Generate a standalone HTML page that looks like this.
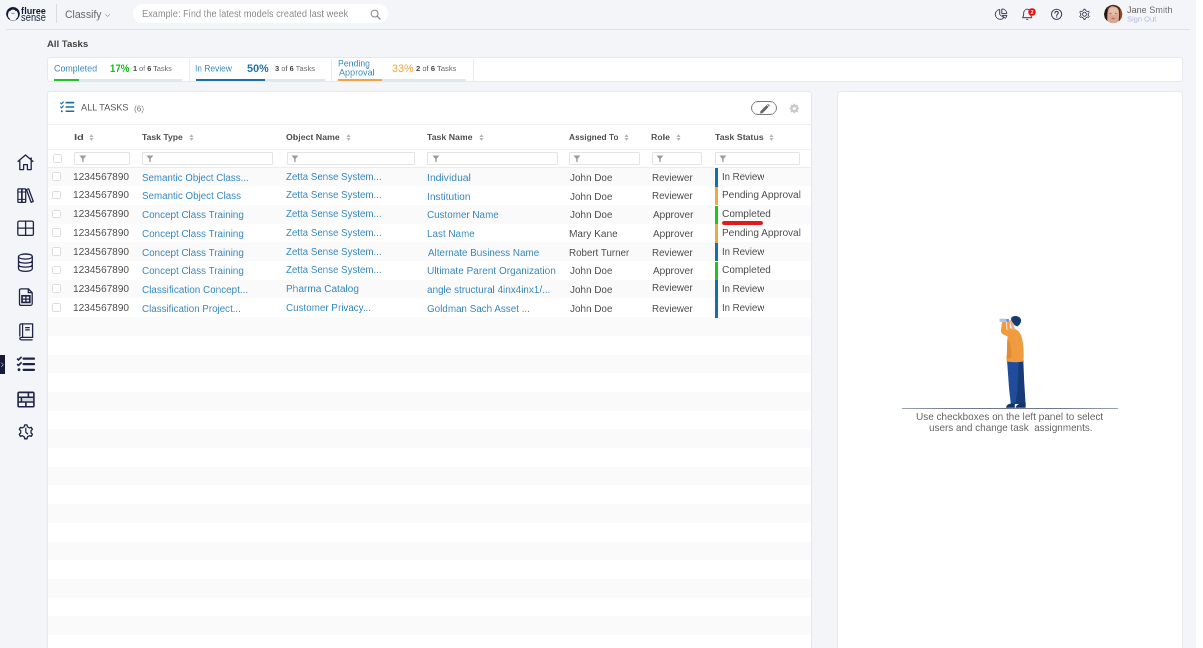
<!DOCTYPE html>
<html><head><meta charset="utf-8"><style>
html,body{margin:0;padding:0}
body{width:1203px;height:648px;overflow:hidden;position:relative;background:#f4f5f9;font-family:"Liberation Sans",sans-serif}
.t{position:absolute;white-space:nowrap;transform-origin:0 0;will-change:transform}
.b{position:absolute}
</style></head><body>
<div class="b" style="left:1196px;top:0px;width:7.00px;height:648.00px;background:#fff"></div>
<div class="b" style="left:6px;top:29px;width:1184.00px;height:1.00px;background:#dfe0e6"></div>
<svg class="b" style="left:0;top:0;will-change:transform" width="56" height="28" viewBox="0 0 56 28">
<circle cx="13" cy="13.85" r="6.9" fill="#121836"/>
<ellipse cx="13" cy="15" rx="5.05" ry="5.55" fill="#f4f5f9"/>
<path d="M9.4 9.4 L11.2 9.4 L10.3 11.2 Z M14.8 9.4 L16.6 9.4 L15.7 11.2 Z" fill="#121836"/>
<path d="M11.3 13.3 H14.7" stroke="#5a5f78" stroke-width="0.7"/>
<path d="M8.6 18.2 L9.8 19 M17.4 18.2 L16.2 19" stroke="#121836" stroke-width="0.9"/>
<text x="21.1" y="13.7" font-family="Liberation Sans" font-weight="bold" font-size="9.9" fill="#121836" textLength="24.8" lengthAdjust="spacingAndGlyphs">fluree</text>
<text x="21.1" y="20.6" font-family="Liberation Sans" font-size="10.8" fill="#121836" textLength="24.8" lengthAdjust="spacingAndGlyphs">sense</text>
</svg>
<div class="b" style="left:56px;top:4.3px;width:1.00px;height:18.40px;background:#dadbe0"></div>
<div class="t" style="left:65.11px;top:9.03px;font-size:21.20px;line-height:21.20px;color:#6a6a6a;transform:scale(0.4918,0.5000);">Classify</div>
<svg class="b" style="left:104px;top:12px" width="8" height="6" viewBox="0 0 8 6"><path d="M1.3 2.3 L3.6 4.5 L5.9 2.3" fill="none" stroke="#8a8a8a" stroke-width="0.8"/></svg>
<div class="b" style="left:133.3px;top:4.3px;width:254.30px;height:18.70px;background:#fff;border-radius:10px"></div>
<div class="t" style="left:141.84px;top:8.70px;font-size:19.60px;line-height:19.60px;color:#8c8c8c;transform:scale(0.4720,0.5000);">Example: Find the latest models created last week</div>
<svg class="b" style="left:369px;top:8px" width="13" height="13" viewBox="0 0 13 13"><circle cx="5.6" cy="5.6" r="3.4" fill="none" stroke="#8a8a8a" stroke-width="1.1"/><path d="M8.1 8.1 L11 11" stroke="#8a8a8a" stroke-width="1.3" stroke-linecap="round"/></svg>
<svg class="b" style="left:990px;top:4px" width="20" height="20" viewBox="0 0 20 20">
<path d="M9.7 5.4 A5 5 0 1 0 13.9 13.8 L9.7 10.6 Z" fill="none" stroke="#393c5b" stroke-width="1" stroke-linejoin="round"/>
<path d="M11.8 5 V9.6 H16.8 A4.6 4.6 0 0 0 11.8 5 Z" fill="none" stroke="#393c5b" stroke-width="1" stroke-linejoin="round"/>
<path d="M12.2 11.6 H17 L15.3 14.4 Z" fill="none" stroke="#393c5b" stroke-width="1" stroke-linejoin="round"/>
</svg>
<svg class="b" style="left:1017px;top:4px" width="20" height="20" viewBox="0 0 20 20">
<path d="M5.4 13.7 C6.4 12.8 6.6 11.4 6.6 9.8 C6.6 7 8 5.2 10.2 5.2 C12.4 5.2 13.8 7 13.8 9.8 C13.8 11.4 14 12.8 15 13.7 Z" fill="none" stroke="#393c5b" stroke-width="1" stroke-linejoin="round"/>
<path d="M9.2 15.2 Q10.2 15.9 11.2 15.2" fill="none" stroke="#393c5b" stroke-width="1"/>
<circle cx="15" cy="8" r="3.7" fill="#ec1016"/>
<text x="15" y="9.7" font-family="Liberation Sans" font-weight="bold" font-size="4.8" fill="#fff" text-anchor="middle">2</text>
</svg>
<svg class="b" style="left:1046px;top:4px" width="20" height="20" viewBox="0 0 20 20">
<circle cx="10.6" cy="10.3" r="5.1" fill="none" stroke="#393c5b" stroke-width="1.05"/>
<path d="M8.9 9.1 C8.9 8 9.6 7.4 10.6 7.4 C11.6 7.4 12.3 8 12.3 8.9 C12.3 10 10.7 10.2 10.7 11.5" fill="none" stroke="#393c5b" stroke-width="1.1" stroke-linecap="round"/>
<circle cx="10.7" cy="13" r="0.65" fill="#393c5b"/>
</svg>
<svg class="b" style="left:1074px;top:4px" width="20" height="20" viewBox="0 0 20 20">
<path d="M14.27 9.30 L15.55 9.57 L15.55 11.03 L14.27 11.30 L13.25 13.06 L13.65 14.31 L12.39 15.04 L11.52 14.07 L9.48 14.07 L8.61 15.04 L7.35 14.31 L7.75 13.06 L6.73 11.30 L5.45 11.03 L5.45 9.57 L6.73 9.30 L7.75 7.54 L7.35 6.29 L8.61 5.56 L9.48 6.53 L11.52 6.53 L12.39 5.56 L13.65 6.29 L13.25 7.54 Z" transform="rotate(-90 10.5 10.3)" fill="none" stroke="#393c5b" stroke-width="1" stroke-linejoin="round"/>
<circle cx="10.5" cy="10.3" r="2" fill="none" stroke="#393c5b" stroke-width="1"/>
</svg>
<svg class="b" style="left:1102px;top:3px" width="22" height="22" viewBox="0 0 22 22">
<defs><clipPath id="av"><circle cx="11.2" cy="11" r="9.2"/></clipPath>
<filter id="bl" x="-20%" y="-20%" width="140%" height="140%"><feGaussianBlur stdDeviation="0.5"/></filter></defs>
<g clip-path="url(#av)"><g filter="url(#bl)">
<rect x="0" y="0" width="22" height="22" fill="#4a2a1c"/>
<path d="M0 0 H6 C4.5 6 4.5 14 5.5 22 H0 Z" fill="#22140e"/>
<path d="M17 0 H22 V22 H17 C18.5 15 18.5 7 17 0 Z" fill="#8a4a2a"/>
<path d="M5.6 22 C5 16 5.2 9 6.6 5.6 C8 3.6 10 3.2 12 3.4 C14.6 3.7 16.2 5 16.8 7.6 C17.4 11 17 16 16.2 22 Z" fill="#d8a892"/>
<ellipse cx="11.6" cy="8.4" rx="4.4" ry="3.8" fill="#e6bfae"/>
<ellipse cx="8.6" cy="10.3" rx="1.1" ry="0.55" fill="#56687a"/><ellipse cx="13.7" cy="10.3" rx="1.1" ry="0.55" fill="#56687a"/>
<ellipse cx="11.1" cy="15.6" rx="1.8" ry="0.75" fill="#c0646e"/>
</g></g></svg>
<div class="t" style="left:1126.90px;top:6.05px;font-size:17.60px;line-height:17.60px;color:#6a6a6a;transform:scale(0.5173,0.5000);">Jane Smith</div>
<div class="t" style="left:1126.90px;top:14.87px;font-size:15.20px;line-height:15.20px;color:#b6bad8;transform:scale(0.4949,0.5000);">Sign Out</div>
<div class="t" style="left:47.10px;top:39.37px;font-size:19.20px;line-height:19.20px;color:#454545;font-weight:bold;transform:scale(0.4963,0.5000);">All Tasks</div>
<div class="b" style="left:47px;top:57px;width:1136.30px;height:24.50px;background:#fff;border:1px solid #e7e8ed;border-radius:3px;box-sizing:border-box"></div>
<div class="b" style="left:188.8px;top:58.5px;width:1.00px;height:22.00px;background:#e9eaee"></div>
<div class="b" style="left:330.8px;top:58.5px;width:1.00px;height:22.00px;background:#e9eaee"></div>
<div class="b" style="left:473.2px;top:58.5px;width:1.00px;height:22.00px;background:#e9eaee"></div>
<div class="t" style="left:54.01px;top:63.61px;font-size:18.40px;line-height:18.40px;color:#3d8bc1;transform:scale(0.4839,0.5000);">Completed</div>
<div class="t" style="left:109.59px;top:62.72px;font-size:22.40px;line-height:22.40px;color:#18c11e;font-weight:bold;transform:scale(0.4326,0.5000);">17%</div>
<div class="t" style="left:133.21px;top:64.64px;font-size:14.80px;line-height:14.80px;color:#6a6a6a;transform:scale(0.4935,0.5000);"><b style="color:#444">1</b> of <b style="color:#444">6</b> Tasks</div>
<div class="b" style="left:54.4px;top:79px;width:127.20px;height:2.00px;background:#dde7ee"></div>
<div class="b" style="left:54.4px;top:79px;width:24.20px;height:2.00px;background:#24c22a"></div>
<div class="t" style="left:194.97px;top:63.61px;font-size:18.40px;line-height:18.40px;color:#3d8bc1;transform:scale(0.4559,0.5000);">In Review</div>
<div class="t" style="left:247.31px;top:62.72px;font-size:22.40px;line-height:22.40px;color:#1f72ad;font-weight:bold;transform:scale(0.4840,0.5000);">50%</div>
<div class="t" style="left:275.20px;top:64.64px;font-size:14.80px;line-height:14.80px;color:#6a6a6a;transform:scale(0.5077,0.5000);"><b style="color:#444">3</b> of <b style="color:#444">6</b> Tasks</div>
<div class="b" style="left:196px;top:79px;width:129.00px;height:2.00px;background:#dde7ee"></div>
<div class="b" style="left:196px;top:79px;width:68.80px;height:2.00px;background:#1f6fa8"></div>
<div class="t" style="left:337.84px;top:59.01px;font-size:18.40px;line-height:18.40px;color:#3d8bc1;transform:scale(0.4738,0.5000);">Pending</div>
<div class="t" style="left:338.50px;top:68.01px;font-size:18.40px;line-height:18.40px;color:#3d8bc1;transform:scale(0.4902,0.5000);">Approval</div>
<div class="t" style="left:391.51px;top:62.72px;font-size:22.40px;line-height:22.40px;color:#efa542;transform:scale(0.4816,0.5000);">33%</div>
<div class="t" style="left:415.69px;top:64.64px;font-size:14.80px;line-height:14.80px;color:#6a6a6a;transform:scale(0.5141,0.5000);"><b style="color:#444">2</b> of <b style="color:#444">6</b> Tasks</div>
<div class="b" style="left:338.3px;top:79px;width:127.40px;height:2.00px;background:#dde7ee"></div>
<div class="b" style="left:338.3px;top:79px;width:43.80px;height:2.00px;background:#eca645"></div>
<div class="b" style="left:0px;top:355.4px;width:5.00px;height:18.50px;background:#15193a"></div>
<svg class="b" style="left:0;top:360px" width="5" height="10" viewBox="0 0 5 10"><path d="M1.2 2.6 L3.3 4.8 L1.2 7" fill="none" stroke="#cfd2e6" stroke-width="0.8"/></svg>
<svg class="b" style="left:15px;top:152px" width="21" height="21" viewBox="0 0 21 21"><path d="M2.6 9.8 L10.5 3 L18.4 9.8 M4.8 8.2 V17.6 H8.6 V12.6 H12.4 V17.6 H16.2 V8.2 M16.2 5.6 V8" fill="none" stroke="#1f2347" stroke-width="1.3" stroke-linejoin="round"/></svg>
<svg class="b" style="left:15px;top:185px" width="21" height="21" viewBox="0 0 21 21"><rect x="2.9" y="3.8" width="3.9" height="13.6" rx="0.6" fill="none" stroke="#1f2347" stroke-width="1.3"/><rect x="6.8" y="3.8" width="3.9" height="13.6" rx="0.6" fill="none" stroke="#1f2347" stroke-width="1.3"/><path d="M2.9 7 H10.7 M2.9 14.4 H10.7" stroke="#1f2347" stroke-width="1"/><path d="M11.4 4.5 L13.6 3.8 L18.3 16.5 L16.1 17.3 Z" fill="none" stroke="#1f2347" stroke-width="1.3" stroke-linejoin="round"/></svg>
<svg class="b" style="left:15px;top:218px" width="21" height="21" viewBox="0 0 21 21"><rect x="2.8" y="3.1" width="15.6" height="14.2" rx="1.4" fill="none" stroke="#1f2347" stroke-width="1.3"/><path d="M10.6 3.1 V17.3 M2.8 10.2 H18.4" stroke="#1f2347" stroke-width="1.3"/></svg>
<svg class="b" style="left:15px;top:252px" width="21" height="21" viewBox="0 0 21 21"><ellipse cx="10.4" cy="4.6" rx="6.9" ry="2.6" fill="none" stroke="#1f2347" stroke-width="1.3"/><path d="M3.5 4.6 V16.6 C3.5 18.1 6.6 19.3 10.4 19.3 C14.2 19.3 17.3 18.1 17.3 16.6 V4.6 M3.5 8.6 C3.5 10.1 6.6 11.2 10.4 11.2 C14.2 11.2 17.3 10.1 17.3 8.6 M3.5 12.6 C3.5 14.1 6.6 15.2 10.4 15.2 C14.2 15.2 17.3 14.1 17.3 12.6" fill="none" stroke="#1f2347" stroke-width="1.3"/></svg>
<svg class="b" style="left:15px;top:286px" width="21" height="21" viewBox="0 0 21 21"><path d="M6 2.8 H13.3 L17.2 6.7 V17.8 Q17.2 19.3 15.7 19.3 H6 Q4.5 19.3 4.5 17.8 V4.3 Q4.5 2.8 6 2.8 Z M13.3 2.8 V6.7 H17.2" fill="none" stroke="#1f2347" stroke-width="1.3" stroke-linejoin="round"/><rect x="7" y="9.8" width="7.8" height="6.6" fill="none" stroke="#1f2347" stroke-width="1.7"/><path d="M10.9 9.8 V16.4 M7 13.1 H14.8" stroke="#1f2347" stroke-width="1.3"/></svg>
<svg class="b" style="left:15px;top:321px" width="21" height="21" viewBox="0 0 21 21"><path d="M4.8 15.6 V4.2 Q4.8 2.8 6.2 2.8 H17.6 V16.4 H6.4 Q4.8 16.4 4.8 17.6 Q4.8 18.8 6.4 18.8 H17.6" fill="none" stroke="#1f2347" stroke-width="1.3" stroke-linejoin="round"/><path d="M7.6 2.8 V16.4 M10.2 6.6 H14.8 M10.2 8.8 H14.8" stroke="#1f2347" stroke-width="1.2"/></svg>
<svg class="b" style="left:15px;top:354px" width="21" height="21" viewBox="0 0 21 21"><path d="M2.1 4.6 L3.5 5.9 L6.6 2.9 M2.1 10.1 L3.5 11.4 L6.6 8.4" fill="none" stroke="#1f2347" stroke-width="1.6"/><circle cx="4" cy="15.8" r="1.45" fill="#1f2347"/><path d="M8.6 4.7 H19 M8.6 10.2 H19 M8.6 15.8 H19" stroke="#1f2347" stroke-width="2.2" stroke-linecap="round"/></svg>
<svg class="b" style="left:15px;top:389px" width="21" height="21" viewBox="0 0 21 21"><rect x="3.1" y="3.4" width="15.8" height="14.4" rx="0.9" fill="none" stroke="#1f2347" stroke-width="1.6"/><path d="M3.1 8.2 H18.9 M3.1 13 H18.9 M13.4 3.4 V8.2 M6.4 8.2 V13 M10.9 13 V17.8" stroke="#1f2347" stroke-width="1.6"/><rect x="7.2" y="9" width="10.9" height="3.2" fill="#9a9cb0" opacity="0.35"/></svg>
<svg class="b" style="left:15px;top:421px" width="22" height="22" viewBox="0 0 22 22"><path d="M15.91 9.28 L17.75 9.70 L17.75 12.00 L15.91 12.42 L14.74 14.45 L15.30 16.25 L13.31 17.40 L12.03 16.02 L9.67 16.02 L8.39 17.40 L6.40 16.25 L6.96 14.45 L5.79 12.42 L3.95 12.00 L3.95 9.70 L5.79 9.28 L6.96 7.25 L6.40 5.45 L8.39 4.30 L9.67 5.68 L12.03 5.68 L13.31 4.30 L15.30 5.45 L14.74 7.25 Z" transform="rotate(-90 10.85 10.85)" fill="none" stroke="#1f2347" stroke-width="1.3" stroke-linejoin="round"/><path d="M10.8 6.8 V11.2 L13 13.3" fill="none" stroke="#1f2347" stroke-width="1.2"/></svg>
<div class="b" style="left:47px;top:91px;width:764.50px;height:609.00px;background:#fff;border:1px solid #e8e8eb;border-radius:3px;box-sizing:border-box;box-shadow:0 0 2px rgba(0,0,0,0.04)"></div>
<svg class="b" style="left:59px;top:100px" width="17" height="14" viewBox="0 0 17 14"><path d="M1.4 2.6 L2.6 3.8 L4.6 1.6 M1.4 6.6 L2.6 7.8 L4.6 5.6" fill="none" stroke="#1a6cae" stroke-width="1.2"/><circle cx="2.8" cy="11.2" r="1" fill="#1a6cae"/><path d="M6.6 2.6 H15.2 M6.6 7 H15.2 M6.6 11.3 H15.2" stroke="#1a6cae" stroke-width="1.6"/></svg>
<div class="t" style="left:81.40px;top:103.34px;font-size:18.80px;line-height:18.80px;color:#595959;transform:scale(0.4856,0.5000);">ALL TASKS</div>
<div class="t" style="left:134.49px;top:104.53px;font-size:16.00px;line-height:16.00px;color:#7a7a7a;transform:scale(0.5114,0.5000);">(6)</div>
<div class="b" style="left:751.3px;top:101.1px;width:25.50px;height:13.70px;border:1px solid #7a7a7a;border-radius:7px;box-sizing:border-box"></div>
<svg class="b" style="left:758px;top:102px" width="13" height="12" viewBox="0 0 13 12"><path d="M2.4 9.2 L8.6 3 L10.6 5 L4.4 11.2 L2.1 11.5 Z" fill="#666"/><path d="M9.2 2.4 L9.9 1.7 L11.9 3.7 L11.2 4.4 Z" fill="#666"/></svg>
<svg class="b" style="left:787px;top:101px" width="15" height="15" viewBox="0 0 15 15"><path d="M10.83 6.41 L12.13 6.70 L12.13 8.30 L10.83 8.59 L10.57 9.23 L11.29 10.35 L10.15 11.49 L9.03 10.77 L8.39 11.03 L8.10 12.33 L6.50 12.33 L6.21 11.03 L5.57 10.77 L4.45 11.49 L3.31 10.35 L4.03 9.23 L3.77 8.59 L2.47 8.30 L2.47 6.70 L3.77 6.41 L4.03 5.77 L3.31 4.65 L4.45 3.51 L5.57 4.23 L6.21 3.97 L6.50 2.67 L8.10 2.67 L8.39 3.97 L9.03 4.23 L10.15 3.51 L11.29 4.65 L10.57 5.77 Z" fill="#c9c9c9"/><circle cx="7.3" cy="7.5" r="1.6" fill="#fff"/></svg>
<div class="b" style="left:48px;top:123.9px;width:762.50px;height:1.00px;background:#eeeff2"></div>
<div class="t" style="left:73.56px;top:132.62px;font-size:17.20px;line-height:17.20px;color:#505050;font-weight:bold;transform:scale(0.6364,0.5000);">Id</div>
<svg class="b" style="left:88.80px;top:133.5px" width="5" height="7" viewBox="0 0 5 7"><path d="M0.4 3 L2.5 0.3 L4.6 3 Z M0.4 4 L2.5 6.7 L4.6 4 Z" fill="#b3b3b3"/></svg>
<div class="b" style="left:74.2px;top:152.3px;width:55.60px;height:12.60px;border:1px solid #e3e3e3;border-radius:1px;box-sizing:border-box"></div>
<svg class="b" style="left:78.60px;top:155px" width="8" height="8" viewBox="0 0 8 8"><path d="M0.4 0.6 H7.4 L4.6 3.8 V7.4 L3.2 6.6 V3.8 Z" fill="#9a9a9a"/></svg>
<div class="t" style="left:141.90px;top:132.62px;font-size:17.20px;line-height:17.20px;color:#505050;font-weight:bold;transform:scale(0.5000,0.5000);">Task Type</div>
<svg class="b" style="left:188.60px;top:133.5px" width="5" height="7" viewBox="0 0 5 7"><path d="M0.4 3 L2.5 0.3 L4.6 3 Z M0.4 4 L2.5 6.7 L4.6 4 Z" fill="#b3b3b3"/></svg>
<div class="b" style="left:142px;top:152.3px;width:130.80px;height:12.60px;border:1px solid #e3e3e3;border-radius:1px;box-sizing:border-box"></div>
<svg class="b" style="left:146.40px;top:155px" width="8" height="8" viewBox="0 0 8 8"><path d="M0.4 0.6 H7.4 L4.6 3.8 V7.4 L3.2 6.6 V3.8 Z" fill="#9a9a9a"/></svg>
<div class="t" style="left:286.39px;top:132.62px;font-size:17.20px;line-height:17.20px;color:#505050;font-weight:bold;transform:scale(0.5115,0.5000);">Object Name</div>
<svg class="b" style="left:346.10px;top:133.5px" width="5" height="7" viewBox="0 0 5 7"><path d="M0.4 3 L2.5 0.3 L4.6 3 Z M0.4 4 L2.5 6.7 L4.6 4 Z" fill="#b3b3b3"/></svg>
<div class="b" style="left:286.7px;top:152.3px;width:128.00px;height:12.60px;border:1px solid #e3e3e3;border-radius:1px;box-sizing:border-box"></div>
<svg class="b" style="left:291.10px;top:155px" width="8" height="8" viewBox="0 0 8 8"><path d="M0.4 0.6 H7.4 L4.6 3.8 V7.4 L3.2 6.6 V3.8 Z" fill="#9a9a9a"/></svg>
<div class="t" style="left:427.20px;top:132.62px;font-size:17.20px;line-height:17.20px;color:#505050;font-weight:bold;transform:scale(0.5090,0.5000);">Task Name</div>
<svg class="b" style="left:478.70px;top:133.5px" width="5" height="7" viewBox="0 0 5 7"><path d="M0.4 3 L2.5 0.3 L4.6 3 Z M0.4 4 L2.5 6.7 L4.6 4 Z" fill="#b3b3b3"/></svg>
<div class="b" style="left:427.3px;top:152.3px;width:131.00px;height:12.60px;border:1px solid #e3e3e3;border-radius:1px;box-sizing:border-box"></div>
<svg class="b" style="left:431.70px;top:155px" width="8" height="8" viewBox="0 0 8 8"><path d="M0.4 0.6 H7.4 L4.6 3.8 V7.4 L3.2 6.6 V3.8 Z" fill="#9a9a9a"/></svg>
<div class="t" style="left:568.81px;top:132.62px;font-size:17.20px;line-height:17.20px;color:#505050;font-weight:bold;transform:scale(0.4861,0.5000);">Assigned To</div>
<svg class="b" style="left:624.20px;top:133.5px" width="5" height="7" viewBox="0 0 5 7"><path d="M0.4 3 L2.5 0.3 L4.6 3 Z M0.4 4 L2.5 6.7 L4.6 4 Z" fill="#b3b3b3"/></svg>
<div class="b" style="left:569px;top:152.3px;width:70.50px;height:12.60px;border:1px solid #e3e3e3;border-radius:1px;box-sizing:border-box"></div>
<svg class="b" style="left:573.40px;top:155px" width="8" height="8" viewBox="0 0 8 8"><path d="M0.4 0.6 H7.4 L4.6 3.8 V7.4 L3.2 6.6 V3.8 Z" fill="#9a9a9a"/></svg>
<div class="t" style="left:651.49px;top:132.62px;font-size:17.20px;line-height:17.20px;color:#505050;font-weight:bold;transform:scale(0.5084,0.5000);">Role</div>
<svg class="b" style="left:676.40px;top:133.5px" width="5" height="7" viewBox="0 0 5 7"><path d="M0.4 3 L2.5 0.3 L4.6 3 Z M0.4 4 L2.5 6.7 L4.6 4 Z" fill="#b3b3b3"/></svg>
<div class="b" style="left:652px;top:152.3px;width:50.00px;height:12.60px;border:1px solid #e3e3e3;border-radius:1px;box-sizing:border-box"></div>
<svg class="b" style="left:656.40px;top:155px" width="8" height="8" viewBox="0 0 8 8"><path d="M0.4 0.6 H7.4 L4.6 3.8 V7.4 L3.2 6.6 V3.8 Z" fill="#9a9a9a"/></svg>
<div class="t" style="left:714.50px;top:132.62px;font-size:17.20px;line-height:17.20px;color:#505050;font-weight:bold;transform:scale(0.5106,0.5000);">Task Status</div>
<svg class="b" style="left:769.10px;top:133.5px" width="5" height="7" viewBox="0 0 5 7"><path d="M0.4 3 L2.5 0.3 L4.6 3 Z M0.4 4 L2.5 6.7 L4.6 4 Z" fill="#b3b3b3"/></svg>
<div class="b" style="left:714.6px;top:152.3px;width:85.10px;height:12.60px;border:1px solid #e3e3e3;border-radius:1px;box-sizing:border-box"></div>
<svg class="b" style="left:719.00px;top:155px" width="8" height="8" viewBox="0 0 8 8"><path d="M0.4 0.6 H7.4 L4.6 3.8 V7.4 L3.2 6.6 V3.8 Z" fill="#9a9a9a"/></svg>
<div class="b" style="left:48px;top:148.6px;width:762.50px;height:1.00px;background:#f0f0f2"></div>
<div class="b" style="left:52.6px;top:154px;width:9.00px;height:8.80px;border:1px solid #dedede;border-radius:1.5px;box-sizing:border-box"></div>
<div class="b" style="left:48px;top:167px;width:762.50px;height:1.00px;background:#ededf0"></div>
<div class="b" style="left:48px;top:167.6px;width:762.50px;height:18.70px;background:#fafafa"></div>
<div class="b" style="left:48px;top:205.0px;width:762.50px;height:18.70px;background:#fafafa"></div>
<div class="b" style="left:48px;top:242.39999999999998px;width:762.50px;height:18.70px;background:#fafafa"></div>
<div class="b" style="left:48px;top:279.79999999999995px;width:762.50px;height:18.70px;background:#fafafa"></div>
<div class="b" style="left:48px;top:317.2px;width:762.50px;height:18.70px;background:#fafafa"></div>
<div class="b" style="left:48px;top:354.6px;width:762.50px;height:18.70px;background:#fafafa"></div>
<div class="b" style="left:48px;top:392.0px;width:762.50px;height:18.70px;background:#fafafa"></div>
<div class="b" style="left:48px;top:429.4px;width:762.50px;height:18.70px;background:#fafafa"></div>
<div class="b" style="left:48px;top:466.79999999999995px;width:762.50px;height:18.70px;background:#fafafa"></div>
<div class="b" style="left:48px;top:504.19999999999993px;width:762.50px;height:18.70px;background:#fafafa"></div>
<div class="b" style="left:48px;top:541.6px;width:762.50px;height:18.70px;background:#fafafa"></div>
<div class="b" style="left:48px;top:579.0px;width:762.50px;height:18.70px;background:#fafafa"></div>
<div class="b" style="left:48px;top:616.4px;width:762.50px;height:18.70px;background:#fafafa"></div>
<div class="b" style="left:52.3px;top:172.2px;width:9.00px;height:8.60px;border:1px solid #dcdcdc;border-radius:1.5px;box-sizing:border-box;background:#fff"></div>
<div class="t" style="left:73.48px;top:171.70px;font-size:19.60px;line-height:19.60px;color:#4f4f4f;transform:scale(0.5140,0.5000);">1234567890</div>
<div class="t" style="left:142.30px;top:172.70px;font-size:19.60px;line-height:19.60px;color:#3889c3;transform:scale(0.4972,0.5000);">Semantic Object Class...</div>
<div class="t" style="left:286.40px;top:171.70px;font-size:19.60px;line-height:19.60px;color:#3889c3;transform:scale(0.4958,0.5000);">Zetta Sense System...</div>
<div class="t" style="left:426.75px;top:172.80px;font-size:19.60px;line-height:19.60px;color:#3889c3;transform:scale(0.5289,0.5000);">Individual</div>
<div class="t" style="left:569.50px;top:172.80px;font-size:19.60px;line-height:19.60px;color:#4f4f4f;transform:scale(0.5060,0.5000);">John Doe</div>
<div class="t" style="left:651.80px;top:172.70px;font-size:19.60px;line-height:19.60px;color:#4f4f4f;transform:scale(0.4975,0.5000);">Reviewer</div>
<div class="b" style="left:714.6px;top:168.1px;width:3.50px;height:18.50px;background:#1a6ea8"></div>
<div class="t" style="left:721.92px;top:171.70px;font-size:19.60px;line-height:19.60px;color:#4f4f4f;transform:scale(0.4905,0.5000);">In Review</div>
<div class="b" style="left:52.3px;top:190.89999999999998px;width:9.00px;height:8.60px;border:1px solid #dcdcdc;border-radius:1.5px;box-sizing:border-box;background:#fff"></div>
<div class="t" style="left:73.48px;top:190.40px;font-size:19.60px;line-height:19.60px;color:#4f4f4f;transform:scale(0.5140,0.5000);">1234567890</div>
<div class="t" style="left:142.30px;top:191.40px;font-size:19.60px;line-height:19.60px;color:#3889c3;transform:scale(0.4995,0.5000);">Semantic Object Class</div>
<div class="t" style="left:286.40px;top:190.40px;font-size:19.60px;line-height:19.60px;color:#3889c3;transform:scale(0.4958,0.5000);">Zetta Sense System...</div>
<div class="t" style="left:426.77px;top:191.50px;font-size:19.60px;line-height:19.60px;color:#3889c3;transform:scale(0.5186,0.5000);">Institution</div>
<div class="t" style="left:569.50px;top:191.50px;font-size:19.60px;line-height:19.60px;color:#4f4f4f;transform:scale(0.5060,0.5000);">John Doe</div>
<div class="t" style="left:651.80px;top:191.40px;font-size:19.60px;line-height:19.60px;color:#4f4f4f;transform:scale(0.4975,0.5000);">Reviewer</div>
<div class="b" style="left:714.6px;top:186.79999999999998px;width:3.50px;height:18.50px;background:#eba84c"></div>
<div class="t" style="left:721.98px;top:190.40px;font-size:19.60px;line-height:19.60px;color:#4f4f4f;transform:scale(0.5139,0.5000);">Pending Approval</div>
<div class="b" style="left:52.3px;top:209.6px;width:9.00px;height:8.60px;border:1px solid #dcdcdc;border-radius:1.5px;box-sizing:border-box;background:#fff"></div>
<div class="t" style="left:73.48px;top:209.10px;font-size:19.60px;line-height:19.60px;color:#4f4f4f;transform:scale(0.5140,0.5000);">1234567890</div>
<div class="t" style="left:142.20px;top:210.10px;font-size:19.60px;line-height:19.60px;color:#3889c3;transform:scale(0.5025,0.5000);">Concept Class Training</div>
<div class="t" style="left:286.40px;top:209.10px;font-size:19.60px;line-height:19.60px;color:#3889c3;transform:scale(0.4958,0.5000);">Zetta Sense System...</div>
<div class="t" style="left:427.20px;top:210.20px;font-size:19.60px;line-height:19.60px;color:#3889c3;transform:scale(0.5028,0.5000);">Customer Name</div>
<div class="t" style="left:569.50px;top:210.20px;font-size:19.60px;line-height:19.60px;color:#4f4f4f;transform:scale(0.5060,0.5000);">John Doe</div>
<div class="t" style="left:652.60px;top:210.10px;font-size:19.60px;line-height:19.60px;color:#4f4f4f;transform:scale(0.5076,0.5000);">Approver</div>
<div class="b" style="left:714.6px;top:205.5px;width:3.50px;height:18.50px;background:#1ec41f"></div>
<div class="t" style="left:722.28px;top:209.10px;font-size:19.60px;line-height:19.60px;color:#4f4f4f;transform:scale(0.5152,0.5000);">Completed</div>
<div class="b" style="left:52.3px;top:228.29999999999998px;width:9.00px;height:8.60px;border:1px solid #dcdcdc;border-radius:1.5px;box-sizing:border-box;background:#fff"></div>
<div class="t" style="left:73.48px;top:227.80px;font-size:19.60px;line-height:19.60px;color:#4f4f4f;transform:scale(0.5140,0.5000);">1234567890</div>
<div class="t" style="left:142.20px;top:228.80px;font-size:19.60px;line-height:19.60px;color:#3889c3;transform:scale(0.5025,0.5000);">Concept Class Training</div>
<div class="t" style="left:286.40px;top:227.80px;font-size:19.60px;line-height:19.60px;color:#3889c3;transform:scale(0.4958,0.5000);">Zetta Sense System...</div>
<div class="t" style="left:426.89px;top:228.90px;font-size:19.60px;line-height:19.60px;color:#3889c3;transform:scale(0.5033,0.5000);">Last Name</div>
<div class="t" style="left:568.78px;top:228.90px;font-size:19.60px;line-height:19.60px;color:#4f4f4f;transform:scale(0.5141,0.5000);">Mary Kane</div>
<div class="t" style="left:652.60px;top:228.80px;font-size:19.60px;line-height:19.60px;color:#4f4f4f;transform:scale(0.5076,0.5000);">Approver</div>
<div class="b" style="left:714.6px;top:224.2px;width:3.50px;height:18.50px;background:#eba84c"></div>
<div class="t" style="left:721.98px;top:227.80px;font-size:19.60px;line-height:19.60px;color:#4f4f4f;transform:scale(0.5139,0.5000);">Pending Approval</div>
<div class="b" style="left:52.3px;top:246.99999999999997px;width:9.00px;height:8.60px;border:1px solid #dcdcdc;border-radius:1.5px;box-sizing:border-box;background:#fff"></div>
<div class="t" style="left:73.48px;top:246.50px;font-size:19.60px;line-height:19.60px;color:#4f4f4f;transform:scale(0.5140,0.5000);">1234567890</div>
<div class="t" style="left:142.20px;top:247.50px;font-size:19.60px;line-height:19.60px;color:#3889c3;transform:scale(0.5025,0.5000);">Concept Class Training</div>
<div class="t" style="left:286.40px;top:246.50px;font-size:19.60px;line-height:19.60px;color:#3889c3;transform:scale(0.4958,0.5000);">Zetta Sense System...</div>
<div class="t" style="left:427.70px;top:247.60px;font-size:19.60px;line-height:19.60px;color:#3889c3;transform:scale(0.5027,0.5000);">Alternate Business Name</div>
<div class="t" style="left:568.80px;top:247.60px;font-size:19.60px;line-height:19.60px;color:#4f4f4f;transform:scale(0.4983,0.5000);">Robert Turner</div>
<div class="t" style="left:651.80px;top:247.50px;font-size:19.60px;line-height:19.60px;color:#4f4f4f;transform:scale(0.4975,0.5000);">Reviewer</div>
<div class="b" style="left:714.6px;top:242.89999999999998px;width:3.50px;height:18.50px;background:#1a6ea8"></div>
<div class="t" style="left:721.92px;top:246.50px;font-size:19.60px;line-height:19.60px;color:#4f4f4f;transform:scale(0.4905,0.5000);">In Review</div>
<div class="b" style="left:52.3px;top:265.70000000000005px;width:9.00px;height:8.60px;border:1px solid #dcdcdc;border-radius:1.5px;box-sizing:border-box;background:#fff"></div>
<div class="t" style="left:73.48px;top:265.20px;font-size:19.60px;line-height:19.60px;color:#4f4f4f;transform:scale(0.5140,0.5000);">1234567890</div>
<div class="t" style="left:142.20px;top:266.20px;font-size:19.60px;line-height:19.60px;color:#3889c3;transform:scale(0.5025,0.5000);">Concept Class Training</div>
<div class="t" style="left:286.40px;top:265.20px;font-size:19.60px;line-height:19.60px;color:#3889c3;transform:scale(0.4958,0.5000);">Zetta Sense System...</div>
<div class="t" style="left:426.98px;top:266.30px;font-size:19.60px;line-height:19.60px;color:#3889c3;transform:scale(0.5120,0.5000);">Ultimate Parent Organization</div>
<div class="t" style="left:569.50px;top:266.30px;font-size:19.60px;line-height:19.60px;color:#4f4f4f;transform:scale(0.5060,0.5000);">John Doe</div>
<div class="t" style="left:652.60px;top:266.20px;font-size:19.60px;line-height:19.60px;color:#4f4f4f;transform:scale(0.5076,0.5000);">Approver</div>
<div class="b" style="left:714.6px;top:261.6px;width:3.50px;height:18.50px;background:#1ec41f"></div>
<div class="t" style="left:722.28px;top:265.20px;font-size:19.60px;line-height:19.60px;color:#4f4f4f;transform:scale(0.5152,0.5000);">Completed</div>
<div class="b" style="left:52.3px;top:284.4px;width:9.00px;height:8.60px;border:1px solid #dcdcdc;border-radius:1.5px;box-sizing:border-box;background:#fff"></div>
<div class="t" style="left:73.48px;top:283.90px;font-size:19.60px;line-height:19.60px;color:#4f4f4f;transform:scale(0.5140,0.5000);">1234567890</div>
<div class="t" style="left:142.20px;top:284.90px;font-size:19.60px;line-height:19.60px;color:#3889c3;transform:scale(0.5048,0.5000);">Classification Concept...</div>
<div class="t" style="left:285.88px;top:283.90px;font-size:19.60px;line-height:19.60px;color:#3889c3;transform:scale(0.5151,0.5000);">Pharma Catalog</div>
<div class="t" style="left:427.30px;top:285.00px;font-size:19.60px;line-height:19.60px;color:#3889c3;transform:scale(0.5058,0.5000);">angle structural 4inx4inx1/...</div>
<div class="t" style="left:569.50px;top:285.00px;font-size:19.60px;line-height:19.60px;color:#4f4f4f;transform:scale(0.5060,0.5000);">John Doe</div>
<div class="t" style="left:651.80px;top:282.50px;font-size:19.60px;line-height:19.60px;color:#4f4f4f;transform:scale(0.4975,0.5000);">Reviewer</div>
<div class="b" style="left:714.6px;top:280.29999999999995px;width:3.50px;height:18.50px;background:#1a6ea8"></div>
<div class="t" style="left:721.92px;top:283.90px;font-size:19.60px;line-height:19.60px;color:#4f4f4f;transform:scale(0.4905,0.5000);">In Review</div>
<div class="b" style="left:52.3px;top:303.1px;width:9.00px;height:8.60px;border:1px solid #dcdcdc;border-radius:1.5px;box-sizing:border-box;background:#fff"></div>
<div class="t" style="left:73.48px;top:302.60px;font-size:19.60px;line-height:19.60px;color:#4f4f4f;transform:scale(0.5140,0.5000);">1234567890</div>
<div class="t" style="left:142.20px;top:303.60px;font-size:19.60px;line-height:19.60px;color:#3889c3;transform:scale(0.4990,0.5000);">Classification Project...</div>
<div class="t" style="left:286.20px;top:302.60px;font-size:19.60px;line-height:19.60px;color:#3889c3;transform:scale(0.5018,0.5000);">Customer Privacy...</div>
<div class="t" style="left:427.20px;top:303.70px;font-size:19.60px;line-height:19.60px;color:#3889c3;transform:scale(0.5025,0.5000);">Goldman Sach Asset ...</div>
<div class="t" style="left:569.50px;top:303.70px;font-size:19.60px;line-height:19.60px;color:#4f4f4f;transform:scale(0.5060,0.5000);">John Doe</div>
<div class="t" style="left:651.80px;top:303.60px;font-size:19.60px;line-height:19.60px;color:#4f4f4f;transform:scale(0.4975,0.5000);">Reviewer</div>
<div class="b" style="left:714.6px;top:299.0px;width:3.50px;height:18.50px;background:#1a6ea8"></div>
<div class="t" style="left:721.92px;top:302.60px;font-size:19.60px;line-height:19.60px;color:#4f4f4f;transform:scale(0.4905,0.5000);">In Review</div>
<div class="b" style="left:722px;top:220.6px;width:41.00px;height:4.00px;background:#e31a1c;border-radius:2px"></div>
<div class="b" style="left:836.5px;top:91px;width:346.80px;height:609.00px;background:#fff;border:1px solid #e8e8eb;border-radius:3px;box-sizing:border-box"></div>
<div class="b" style="left:901.5px;top:408px;width:216.80px;height:1.00px;background:linear-gradient(90deg,#9aa2b6 0%,#6f7892 25%,#6f7892 75%,#9aa2b6 100%)"></div>
<div class="t" style="left:916.29px;top:412.02px;font-size:19.80px;line-height:19.80px;color:#666;transform:scale(0.5049,0.5000);">Use checkboxes on the left panel to select</div>
<div class="t" style="left:928.80px;top:422.82px;font-size:19.80px;line-height:19.80px;color:#666;transform:scale(0.5006,0.5000);">users and change task&nbsp; assignments.</div>
<svg class="b" style="left:994px;top:312px" width="36" height="97" viewBox="0 0 36 97">
<path d="M22 48 L29.3 48 L30.2 70 L31.6 92 L20 92 L22 80 Z" fill="#173b77"/>
<path d="M13 48 L24.8 48 L23.4 80 L21 92 L16.8 92 L15.2 78 Z" fill="#1f4c9b"/>
<path d="M12 95.8 C12.3 93.2 14.5 92 16.8 91.6 L20.8 91.6 L20.8 95.8 Z" fill="#12306a"/>
<path d="M21.5 95.8 C22 93.5 24.5 92 27 91.6 L31.6 91.6 L31.6 95.8 Z" fill="#12306a"/>
<path d="M14 17 C17 16 21 16.5 23.5 18.5 C27 21 28.5 26 29.3 34 C29.8 40 29.8 45 29.3 49.5 C24 50.5 18 50.5 12.5 49.5 C12.8 42 13.2 34 13.5 27 Z" fill="#ef9b40"/>
<path d="M13.5 27 C16.5 31 17.8 37 17.2 46 L12.8 47 Z" fill="#e38b32"/>
<path d="M16 8 L19.5 8 L20 15 L21.8 17.6 L17.8 18.2 L17.4 14 C16.5 13 16 11 16 8 Z" fill="#f2a985"/>
<path d="M17 7 C17 4.5 19.5 3.8 22 4 C25.5 4.2 27.5 6.5 27 9.5 C26.6 11.8 25 13.5 23.2 14.5 L20.6 13.2 C19.6 11 17.6 10 17 7 Z" fill="#173a70"/>
<path d="M8.4 8.6 L12 8.6 L12.6 17.4 L19.5 21 L18.3 26.5 L9.2 22.4 C7.1 21.4 6.6 19.6 7 17.2 Z" fill="#ef9b40"/>
<path d="M12.8 8.6 L15.6 8.6 L16.4 18.4 L13.4 18.2 Z" fill="#f0a048"/>
<path d="M5.6 6.7 H12.2 V9.9 H5.6 Z" fill="#a6c6f2"/>
<path d="M12 7 H15 V9.7 H12 Z" fill="#6a9ce6"/>
</svg>
</body></html>
